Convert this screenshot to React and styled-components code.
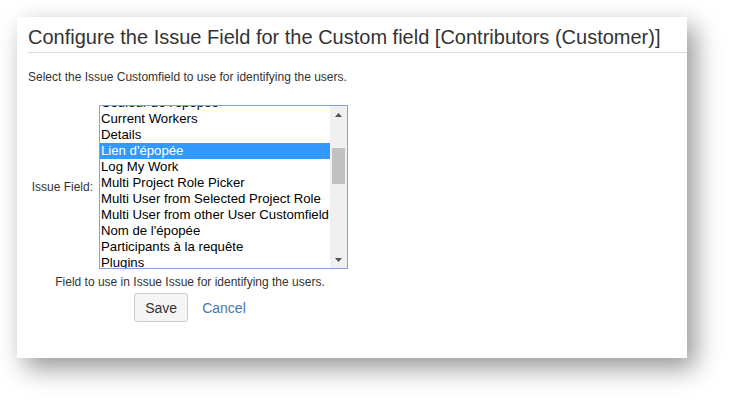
import React from 'react';
import styled, { createGlobalStyle } from 'styled-components';

const GlobalStyle = createGlobalStyle`
    html, body {
        margin: 0;
        padding: 0;
        background: #ffffff;
    }
    body {
        font-family: 'Liberation Sans', Arial, sans-serif;
        color: #333333;
    }
`;

const options = [
    "Couleur de l'épopée",
    'Current Workers',
    'Details',
    "Lien d'épopée",
    'Log My Work',
    'Multi Project Role Picker',
    'Multi User from Selected Project Role',
    'Multi User from other User Customfield',
    "Nom de l'épopée",
    'Participants à la requête',
    'Plugins',
];

const selected = "Lien d'épopée";

const App = () => {
    return (
        <>
            <GlobalStyle />
            <Page>
                <Panel>
                    <Title>Configure the Issue Field for the Custom field [Contributors (Customer)]</Title>
                    <Intro>Select the Issue Customfield to use for identifying the users.</Intro>
                    <Form>
                        <FieldRow>
                            <Label>Issue Field:</Label>
                            <ListBox>
                                <ListViewport>
                                    <ListItems>
                                        {options.map((o, i) =>
                                            <Option key={i} $active={o === selected}>{o}</Option>
                                        )}
                                    </ListItems>
                                </ListViewport>
                                <Scrollbar>
                                    <Arrow>
                                        <svg width="7" height="4" viewBox="0 0 7 4"><path d="M0 4 L3.5 0 L7 4 Z" fill="#505050" /></svg>
                                    </Arrow>
                                    <Track>
                                        <Thumb />
                                    </Track>
                                    <Arrow>
                                        <svg width="7" height="4" viewBox="0 0 7 4"><path d="M0 0 L3.5 4 L7 0 Z" fill="#505050" /></svg>
                                    </Arrow>
                                </Scrollbar>
                            </ListBox>
                        </FieldRow>
                        <Hint>Field to use in Issue Issue for identifying the users.</Hint>
                        <Buttons>
                            <SaveButton>Save</SaveButton>
                            <CancelLink href="#">Cancel</CancelLink>
                        </Buttons>
                    </Form>
                </Panel>
            </Page>
        </>
    );
};
export default App;

const Page = styled.div`
    padding: 17px 0 0 17px;
    width: 735px;
    height: 406px;
    box-sizing: border-box;
`;
const Panel = styled.div`
    width: 670px;
    height: 341px;
    background: #ffffff;
    box-shadow: 8px 10px 24px rgba(0, 0, 0, 0.42);
    box-sizing: border-box;
    padding-top: 8px;
`;
const Title = styled.h2`
    margin: 0 0 0 11px;
    padding-bottom: 3px;
    border-bottom: 1px solid #dddddd;
    font-size: 20px;
    font-weight: normal;
    line-height: 24px;
    color: #333333;
    white-space: nowrap;
`;
const Intro = styled.p`
    margin: 17px 0 0 11px;
    font-size: 12px;
    line-height: 14px;
    color: #333333;
`;
const Form = styled.div`
    margin: 21px 0 0 11px;
    width: 324px;
    display: flex;
    flex-direction: column;
    align-items: center;
`;
const FieldRow = styled.div`
    align-self: stretch;
    display: flex;
    align-items: center;
    gap: 6px;
`;
const Label = styled.label`
    width: 65px;
    text-align: right;
    font-size: 12px;
    color: #333333;
    white-space: nowrap;
`;
const ListBox = styled.div`
    width: 249px;
    height: 164px;
    border: 1px solid #7fa5dc;
    box-sizing: border-box;
    display: flex;
    background: #ffffff;
`;
const ListViewport = styled.div`
    flex: 1;
    overflow: hidden;
`;
const ListItems = styled.div`
    margin-top: -11px;
`;
const Option = styled.div`
    height: 16px;
    line-height: 16px;
    padding-left: 1px;
    font-size: 13.2px;
    white-space: nowrap;
    color: ${p => p.$active ? '#ffffff' : '#000000'};
    background: ${p => p.$active ? '#3399ff' : 'transparent'};
`;
const Scrollbar = styled.div`
    width: 17px;
    background: #f0f0f0;
    display: flex;
    flex-direction: column;
`;
const Arrow = styled.div`
    height: 17px;
    display: flex;
    align-items: center;
    justify-content: center;
`;
const Track = styled.div`
    flex: 1;
    padding: 25px 2px 0 2px;
`;
const Thumb = styled.div`
    height: 36px;
    background: #c1c1c1;
`;
const Hint = styled.div`
    margin-top: 6px;
    font-size: 12px;
    line-height: 14px;
    color: #333333;
    white-space: nowrap;
`;
const Buttons = styled.div`
    margin-top: 4px;
    display: flex;
    align-items: center;
    gap: 14px;
`;
const SaveButton = styled.button`
    height: 29px;
    padding: 0 10px;
    border: 1px solid #cccccc;
    border-radius: 3px;
    background: #f5f5f5;
    font-family: 'Liberation Sans', Arial, sans-serif;
    font-size: 14px;
    color: #333333;
`;
const CancelLink = styled.a`
    font-size: 14px;
    color: #4a76ad;
    text-decoration: none;
`;
